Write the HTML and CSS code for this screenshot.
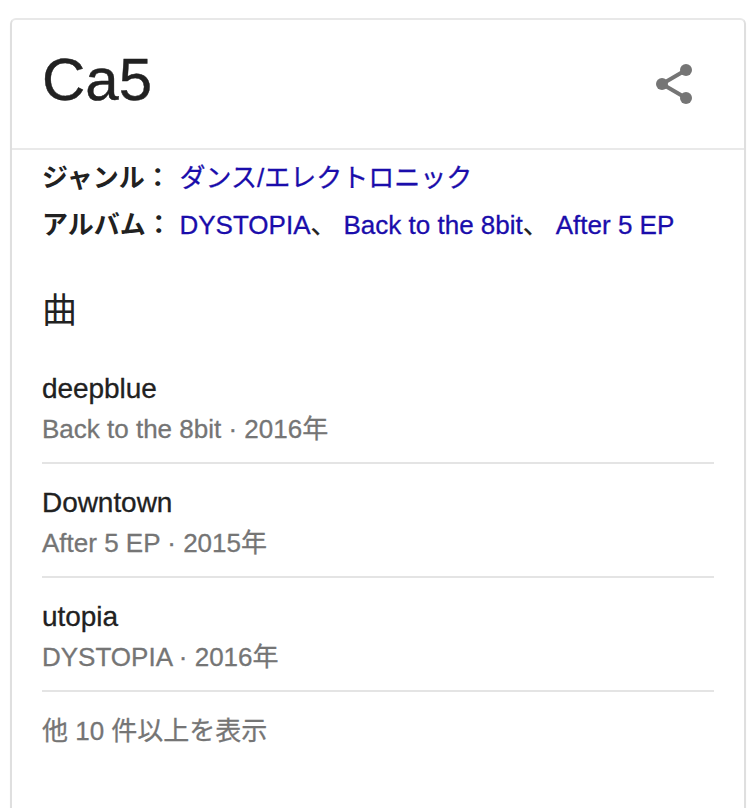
FILE: index.html
```html
<!DOCTYPE html>
<html lang="ja">
<head>
<meta charset="utf-8">
<title>Ca5</title>
<link rel="stylesheet" href="styles.css">
</head>
<body>
<main class="card">
  <header class="head">
    <h1>Ca5</h1>
    <svg class="share" viewBox="0 0 38 42" aria-hidden="true">
      <path d="M31 7 7 21 31 35" fill="none" stroke="currentColor" stroke-width="4"/>
      <circle cx="31" cy="7" r="6"/><circle cx="7" cy="21" r="6"/><circle cx="31" cy="35" r="6"/>
    </svg>
  </header>
  <section class="body">
    <p class="fact"><b class="label">ジャンル：</b><a>ダンス/エレクトロニック</a></p>
    <p class="fact"><b class="label">アルバム：</b><a>DYSTOPIA</a><span class="sep">、</span><a>Back to the 8bit</a><span class="sep">、</span><a>After 5 EP</a></p>
    <h2>曲</h2>
    <ul class="songs">
      <li><div class="title">deepblue</div><div class="meta">Back to the 8bit · 2016年</div></li>
      <li><div class="title">Downtown</div><div class="meta">After 5 EP · 2015年</div></li>
      <li><div class="title">utopia</div><div class="meta">DYSTOPIA · 2016年</div></li>
    </ul>
    <div class="more">他 10 件以上を表示</div>
  </section>
</main>
</body>
</html>
```
FILE: styles.css
```css
* { box-sizing: border-box; }
body { margin: 0; background: #fff; height: 808px; overflow: hidden; font-family: "Liberation Sans", "Noto Sans CJK JP", sans-serif; font-size: 26px; color: #212121; }
.card { margin: 18px 10px 0; height: 820px; border: 2px solid #dfdfdf; border-top-color: #e8e8e8; border-radius: 6px; box-shadow: 0 2px 2px #00000008; }
.head { height: 130px; border-bottom: 2px solid #e9e9e9; display: flex; justify-content: space-between; padding: 24px 51px 0 30px; }
h1 { margin: 0; font-size: 60px; line-height: 72px; font-weight: 400; -webkit-text-stroke: 0.4px; }
.share { width: 38px; height: 42px; margin-top: 19px; fill: #757575; color: #757575; }
.body { padding: 5px 30px 0; -webkit-text-stroke: 0.3px; }
.fact { margin: 0; height: 47px; line-height: 47px; white-space: nowrap; display: flex; }
.label { width: 137.5px; -webkit-text-stroke: 0; }
.fact a { color: #1a0dab; }
.sep { width: 33px; }
h2 { margin: 37px 0 0; font-size: 35px; line-height: 50px; font-weight: 400; -webkit-text-stroke: 0; }
.songs { list-style: none; margin: 14px 0 0; padding: 0; }
.songs li { height: 114px; padding-top: 18px; border-bottom: 2px solid #e4e4e4; }
.title { font-size: 28px; line-height: 41px; letter-spacing: -0.05px; }
.meta, .more { line-height: 40px; color: #757575; }
.more { margin-top: 19px; }
```
